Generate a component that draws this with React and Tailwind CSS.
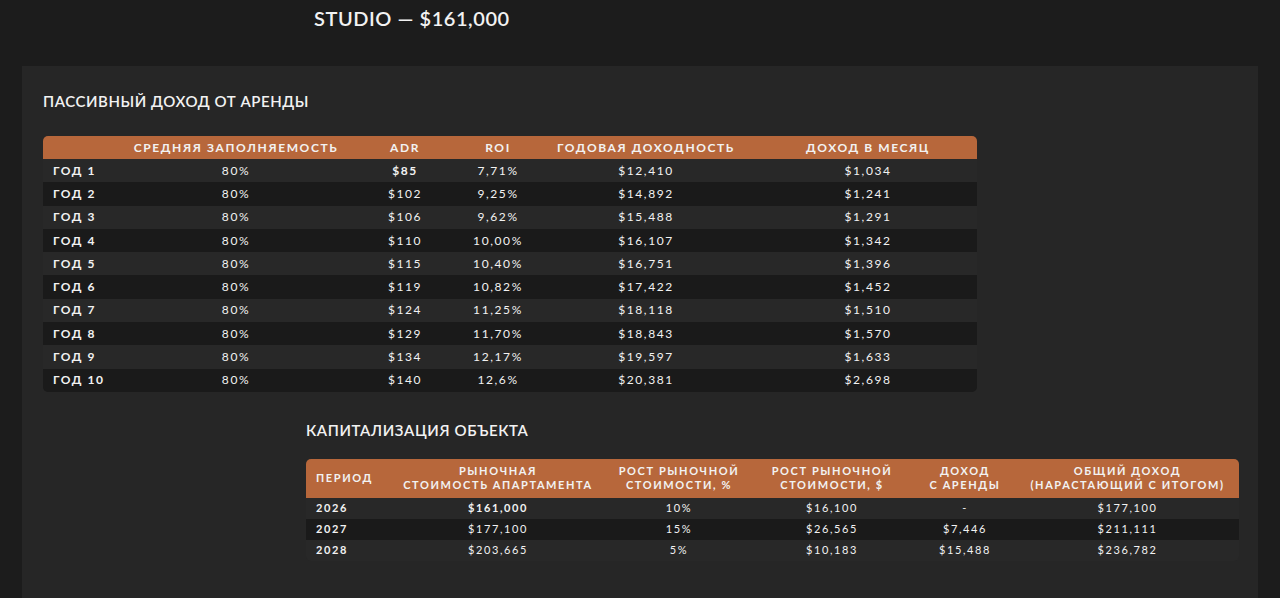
const rent = [
  ["ГОД 1", "80%", "$85", "7,71%", "$12,410", "$1,034"],
  ["ГОД 2", "80%", "$102", "9,25%", "$14,892", "$1,241"],
  ["ГОД 3", "80%", "$106", "9,62%", "$15,488", "$1,291"],
  ["ГОД 4", "80%", "$110", "10,00%", "$16,107", "$1,342"],
  ["ГОД 5", "80%", "$115", "10,40%", "$16,751", "$1,396"],
  ["ГОД 6", "80%", "$119", "10,82%", "$17,422", "$1,452"],
  ["ГОД 7", "80%", "$124", "11,25%", "$18,118", "$1,510"],
  ["ГОД 8", "80%", "$129", "11,70%", "$18,843", "$1,570"],
  ["ГОД 9", "80%", "$134", "12,17%", "$19,597", "$1,633"],
  ["ГОД 10", "80%", "$140", "12,6%", "$20,381", "$2,698"],
];

const capital = [
  ["2026", "$161,000", "10%", "$16,100", "-", "$177,100"],
  ["2027", "$177,100", "15%", "$26,565", "$7,446", "$211,111"],
  ["2028", "$203,665", "5%", "$10,183", "$15,488", "$236,782"],
];

export default function App() {
  return (
    <div
      className="min-h-[598px] bg-[#1c1c1c] text-[#f2f2f2]"
      style={{ fontFamily: "Lato, 'Open Sans', sans-serif" }}
    >
      <div className="h-[66px] pl-[314px] pt-[6px]">
        <h1 className="text-[20px] font-semibold leading-[24px] tracking-[0.55px]">STUDIO — $161,000</h1>
      </div>

      <div className="mx-[22px] min-h-[532px] bg-[#262626] pl-[21px] pt-[25px] pb-8">
        <h2 className="text-[15px] font-semibold leading-[20px] tracking-[0.55px]">ПАССИВНЫЙ ДОХОД ОТ АРЕНДЫ</h2>

        {/* Rental income table */}
        <div className="mt-[25px] w-[934px] overflow-hidden rounded-[5px] text-[12px] tracking-[1.6px]">
          <div className="grid h-[23px] grid-cols-[82px_222px_116px_70px_226px_218px] items-center bg-[#b7673b] font-bold">
            <div></div>
            <div className="text-center">СРЕДНЯЯ ЗАПОЛНЯЕМОСТЬ</div>
            <div className="text-center">ADR</div>
            <div className="text-center">ROI</div>
            <div className="text-center">ГОДОВАЯ ДОХОДНОСТЬ</div>
            <div className="text-center">ДОХОД В МЕСЯЦ</div>
          </div>
          {rent.map((r, i) => (
            <div
              key={r[0]}
              className={`grid h-[23.3px] grid-cols-[82px_222px_116px_70px_226px_218px] items-center ${
                i % 2 === 0 ? "bg-[#282828]" : "bg-[#1a1a1a]"
              }`}
            >
              <div className="pl-[10px] font-bold">{r[0]}</div>
              <div className="text-center">{r[1]}</div>
              <div className={`text-center ${i === 0 ? "font-bold" : ""}`}>{r[2]}</div>
              <div className="text-center">{r[3]}</div>
              <div className="text-center">{r[4]}</div>
              <div className="text-center">{r[5]}</div>
            </div>
          ))}
        </div>

        <div className="ml-[263px]">
          <h2 className="mt-[28px] text-[15px] font-semibold leading-[20px] tracking-[0.6px]">КАПИТАЛИЗАЦИЯ ОБЪЕКТА</h2>

          {/* Capitalization table */}
          <div className="mt-[19px] w-[933px] overflow-hidden rounded-[5px] text-[11px] tracking-[1.6px]">
            <div className="grid h-[39px] grid-cols-[82px_220px_142px_164px_102px_223px] items-center bg-[#b7673b] font-bold leading-[14px]">
              <div className="pl-[10px]">ПЕРИОД</div>
              <div className="text-center">РЫНОЧНАЯ<br />СТОИМОСТЬ АПАРТАМЕНТА</div>
              <div className="text-center">РОСТ РЫНОЧНОЙ<br />СТОИМОСТИ, %</div>
              <div className="text-center">РОСТ РЫНОЧНОЙ<br />СТОИМОСТИ, $</div>
              <div className="text-center">ДОХОД<br />С АРЕНДЫ</div>
              <div className="text-center">ОБЩИЙ ДОХОД<br />(НАРАСТАЮЩИЙ С ИТОГОМ)</div>
            </div>
            {capital.map((r, i) => (
              <div
                key={r[0]}
                className={`grid h-[21px] grid-cols-[82px_220px_142px_164px_102px_223px] items-center ${
                  i % 2 === 0 ? "bg-[#282828]" : "bg-[#1a1a1a]"
                }`}
              >
                <div className="pl-[10px] font-bold">{r[0]}</div>
                <div className={`text-center ${i === 0 ? "font-bold" : ""}`}>{r[1]}</div>
                <div className="text-center">{r[2]}</div>
                <div className="text-center">{r[3]}</div>
                <div className="text-center">{r[4]}</div>
                <div className="text-center">{r[5]}</div>
              </div>
            ))}
          </div>
        </div>
      </div>
    </div>
  );
}
